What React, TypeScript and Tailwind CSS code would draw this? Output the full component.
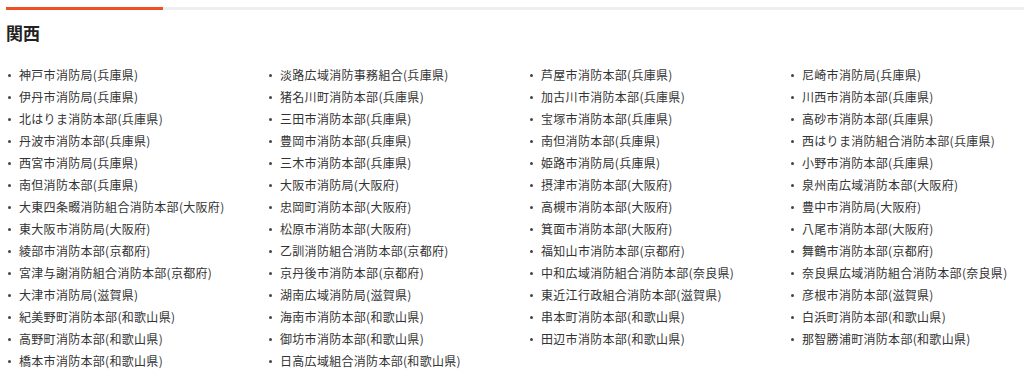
import React from "react";

const items = [
  "神戸市消防局(兵庫県)", "淡路広域消防事務組合(兵庫県)", "芦屋市消防本部(兵庫県)", "尼崎市消防局(兵庫県)",
  "伊丹市消防局(兵庫県)", "猪名川町消防本部(兵庫県)", "加古川市消防本部(兵庫県)", "川西市消防本部(兵庫県)",
  "北はりま消防本部(兵庫県)", "三田市消防本部(兵庫県)", "宝塚市消防本部(兵庫県)", "高砂市消防本部(兵庫県)",
  "丹波市消防本部(兵庫県)", "豊岡市消防本部(兵庫県)", "南但消防本部(兵庫県)", "西はりま消防組合消防本部(兵庫県)",
  "西宮市消防局(兵庫県)", "三木市消防本部(兵庫県)", "姫路市消防局(兵庫県)", "小野市消防本部(兵庫県)",
  "南但消防本部(兵庫県)", "大阪市消防局(大阪府)", "摂津市消防本部(大阪府)", "泉州南広域消防本部(大阪府)",
  "大東四条畷消防組合消防本部(大阪府)", "忠岡町消防本部(大阪府)", "高槻市消防本部(大阪府)", "豊中市消防局(大阪府)",
  "東大阪市消防局(大阪府)", "松原市消防本部(大阪府)", "箕面市消防本部(大阪府)", "八尾市消防本部(大阪府)",
  "綾部市消防本部(京都府)", "乙訓消防組合消防本部(京都府)", "福知山市消防本部(京都府)", "舞鶴市消防本部(京都府)",
  "宮津与謝消防組合消防本部(京都府)", "京丹後市消防本部(京都府)", "中和広域消防組合消防本部(奈良県)", "奈良県広域消防組合消防本部(奈良県)",
  "大津市消防局(滋賀県)", "湖南広域消防局(滋賀県)", "東近江行政組合消防本部(滋賀県)", "彦根市消防本部(滋賀県)",
  "紀美野町消防本部(和歌山県)", "海南市消防本部(和歌山県)", "串本町消防本部(和歌山県)", "白浜町消防本部(和歌山県)",
  "高野町消防本部(和歌山県)", "御坊市消防本部(和歌山県)", "田辺市消防本部(和歌山県)", "那智勝浦町消防本部(和歌山県)",
  "橋本市消防本部(和歌山県)", "日高広域組合消防本部(和歌山県)",
];

export default function App() {
  return (
    <div
      className="bg-white w-[1024px] h-[373px] overflow-hidden pt-[7px] pl-[6px] text-[#333]"
      style={{ fontFamily: '"Noto Sans CJK JP", "Noto Sans", sans-serif' }}
    >
      <div className="h-[3px] bg-[#eeeeee] w-[1018px] flex">
        <div className="h-full w-[157px] bg-[#f04e23]" />
      </div>
      <h2 className="mt-[10px] text-[17px] leading-[25px] font-bold text-[#222]">関西</h2>
      <ul className="mt-[19px] grid grid-cols-[261px_261px_261px_261px]">
        {items.map((t, i) => (
          <li key={i} className="flex items-center h-[22px] text-[12px] tracking-[0.3px] whitespace-nowrap">
            <span className="w-[3px] h-[3px] rounded-full bg-[#444] ml-[2px] mr-[8px] shrink-0" />
            <span>{t}</span>
          </li>
        ))}
      </ul>
    </div>
  );
}
